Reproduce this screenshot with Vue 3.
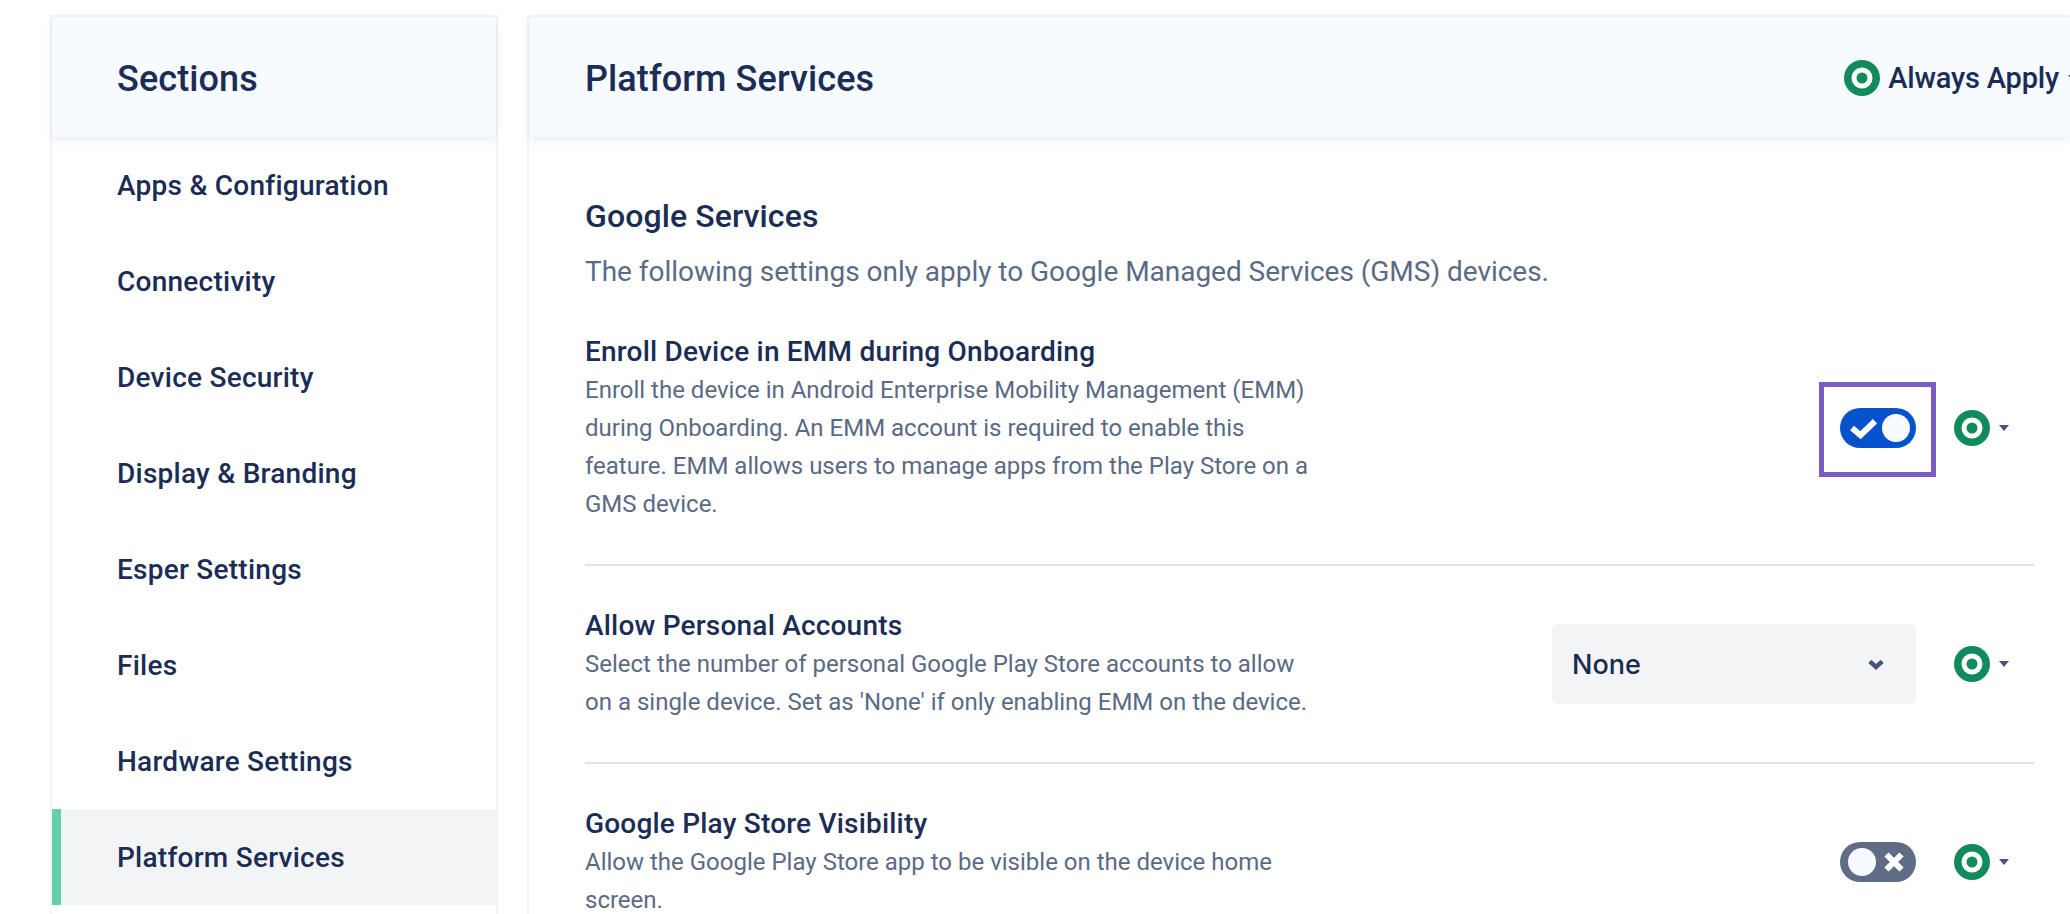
<script setup>
const sections = [
  'Apps & Configuration',
  'Connectivity',
  'Device Security',
  'Display & Branding',
  'Esper Settings',
  'Files',
  'Hardware Settings',
  'Platform Services',
]
</script>

<template>
  <div class="page">
    <aside class="sidebar">
      <header class="panel-head">
        <h2 class="panel-title">Sections</h2>
      </header>
      <nav>
        <a
          v-for="s in sections"
          :key="s"
          class="nav-item"
          :class="{ active: s === 'Platform Services' }"
        >{{ s }}</a>
      </nav>
    </aside>

    <main class="main">
      <header class="panel-head main-head">
        <h2 class="panel-title">Platform Services</h2>
        <div class="always">
          <svg class="target" viewBox="0 0 36 36"><circle cx="18" cy="18" r="18" fill="#118a5c"/><circle cx="18" cy="18" r="10.5" fill="#fff"/><circle cx="18" cy="18" r="5.5" fill="#118a5c"/></svg>
          <span>Always Apply</span>
          <span class="caret head-caret"></span>
        </div>
      </header>

      <section class="content">
        <h3 class="section-title">Google Services</h3>
        <p class="section-sub">The following settings only apply to Google Managed Services (GMS) devices.</p>

        <div class="row">
          <div class="text">
            <div class="row-title">Enroll Device in EMM during Onboarding</div>
            <div class="row-desc">Enroll the device in Android Enterprise Mobility Management (EMM)<br>during Onboarding. An EMM account is required to enable this<br>feature. EMM allows users to manage apps from the Play Store on a<br>GMS device.</div>
          </div>
          <div class="controls">
            <div class="toggle on">
              <svg class="glyph" viewBox="0 0 27 21"><path d="M2 10 L10.5 17.2 L25 3.2" fill="none" stroke="#fff" stroke-width="6"/></svg>
              <span class="knob"></span>
              <span class="highlight"></span>
            </div>
            <svg class="target" viewBox="0 0 36 36"><circle cx="18" cy="18" r="18" fill="#118a5c"/><circle cx="18" cy="18" r="10.5" fill="#fff"/><circle cx="18" cy="18" r="5.5" fill="#118a5c"/></svg>
            <span class="caret"></span>
          </div>
        </div>

        <div class="row">
          <div class="text">
            <div class="row-title">Allow Personal Accounts</div>
            <div class="row-desc">Select the number of personal Google Play Store accounts to allow<br>on a single device. Set as 'None' if only enabling EMM on the device.</div>
          </div>
          <div class="controls">
            <div class="select">
              <span>None</span>
              <svg class="chev" viewBox="0 0 16 11"><path d="M1.8 2.4 L8 8 L14.2 2.4" fill="none" stroke="#46557a" stroke-width="4.4"/></svg>
            </div>
            <svg class="target" viewBox="0 0 36 36"><circle cx="18" cy="18" r="18" fill="#118a5c"/><circle cx="18" cy="18" r="10.5" fill="#fff"/><circle cx="18" cy="18" r="5.5" fill="#118a5c"/></svg>
            <span class="caret"></span>
          </div>
        </div>

        <div class="row last">
          <div class="text">
            <div class="row-title">Google Play Store Visibility</div>
            <div class="row-desc">Allow the Google Play Store app to be visible on the device home<br>screen.</div>
          </div>
          <div class="controls">
            <div class="toggle off">
              <span class="knob"></span>
              <svg class="glyph" viewBox="0 0 20 20"><path d="M2.5 2.5 L17.5 17.5 M17.5 2.5 L2.5 17.5" fill="none" stroke="#fff" stroke-width="6"/></svg>
            </div>
            <svg class="target" viewBox="0 0 36 36"><circle cx="18" cy="18" r="18" fill="#118a5c"/><circle cx="18" cy="18" r="10.5" fill="#fff"/><circle cx="18" cy="18" r="5.5" fill="#118a5c"/></svg>
            <span class="caret"></span>
          </div>
        </div>
      </section>
    </main>
  </div>
</template>

<style>
html, body { margin: 0; background: #fff; overflow: hidden; }
</style>

<style scoped>
.page {
  width: 2070px;
  height: 914px;
  box-sizing: border-box;
  overflow: hidden;
  display: flex;
  align-items: flex-start;
  gap: 29px;
  padding: 15px 0 0 50px;
  font-family: Roboto, "Noto Sans", sans-serif;
  color: #1b2d55;
}
.sidebar {
  flex: 0 0 448px;
  height: 920px;
  box-sizing: border-box;
  border: 2px solid #f3f4f6;
  border-bottom: 0;
}
.main {
  flex: 1 0 0;
  min-width: 0;
  height: 920px;
  box-sizing: border-box;
  border: 2px solid #f3f4f6;
  border-right: 0;
  border-bottom: 0;
}
.panel-head {
  height: 120px;
  box-sizing: border-box;
  background: #f7faff;
  box-shadow: 0 3px 8px rgba(30, 45, 85, 0.09);
  display: flex;
  align-items: center;
  padding: 3px 0 0 65px;
  position: relative;
}
.main-head {
  padding-left: 56px;
  padding-right: 11px;
  justify-content: space-between;
}
.panel-title {
  margin: 0;
  font-size: 36px;
  line-height: 44px;
  font-weight: 500;
  letter-spacing: 0.1px;
}
.always {
  display: flex;
  align-items: center;
  gap: 8px;
  font-size: 29px;
  font-weight: 500;
  letter-spacing: -0.2px;
  margin-top: -2px;
}
.target {
  width: 36px;
  height: 36px;
  flex: none;
}
.nav-item {
  display: flex;
  align-items: center;
  height: 96px;
  box-sizing: border-box;
  padding-left: 65px;
  font-size: 28px;
  font-weight: 500;
  letter-spacing: 0.25px;
}
.nav-item.active {
  background: #f3f4f6;
  border-left: 9px solid #63d0a8;
  padding-left: 56px;
}
.content {
  padding: 59px 36px 0 56px;
}
.section-title {
  margin: 0;
  font-size: 32px;
  line-height: 40px;
  font-weight: 500;
  letter-spacing: 0.1px;
}
.section-sub {
  margin: 16px 0 0;
  font-size: 28px;
  line-height: 40px;
  letter-spacing: -0.03px;
  color: #5a6a85;
}
.row {
  display: flex;
  justify-content: space-between;
  align-items: center;
  padding: 41px 0 41px;
  border-bottom: 2px solid #e2e3e9;
}
.row.last { border-bottom: 0; }
.row-title {
  font-size: 28px;
  line-height: 38px;
  font-weight: 500;
  letter-spacing: 0.2px;
}
.row-desc {
  font-size: 24px;
  line-height: 38px;
  color: #5a6a85;
}
.controls {
  display: flex;
  align-items: center;
  padding-right: 25px;
}
.controls .target { margin-left: 38px; }
.caret {
  margin-left: 9px;
  width: 0;
  height: 0;
  border-left: 5px solid transparent;
  border-right: 5px solid transparent;
  border-top: 6px solid #46557a;
}
.head-caret {
  margin-left: 1px;
  margin-right: -19px;
}
.toggle {
  width: 76px;
  height: 40px;
  border-radius: 20px;
  box-sizing: border-box;
  padding: 0 6px 0 10px;
  display: flex;
  align-items: center;
  justify-content: space-between;
  position: relative;
}
.toggle.on { background: #0552cc; }
.toggle.off { background: #5f6c85; padding: 0 12px 0 8px; }
.knob {
  width: 28px;
  height: 28px;
  border-radius: 50%;
  background: #f7faff;
}
.glyph { flex: none; }
.on .glyph { width: 27px; height: 21px; }
.off .glyph { width: 20px; height: 20px; }
.highlight {
  position: absolute;
  left: -21px;
  top: -26px;
  width: 117px;
  height: 95px;
  box-sizing: border-box;
  border: 5px solid #7c5cc4;
}
.select {
  width: 364px;
  height: 80px;
  box-sizing: border-box;
  background: #f3f4f6;
  border-radius: 6px;
  padding: 0 32px 0 20px;
  display: flex;
  align-items: center;
  justify-content: space-between;
  font-family: Inter, sans-serif;
  font-size: 27px;
  font-weight: 500;
  color: #172a50;
}
.chev { width: 16px; height: 11px; }
</style>
